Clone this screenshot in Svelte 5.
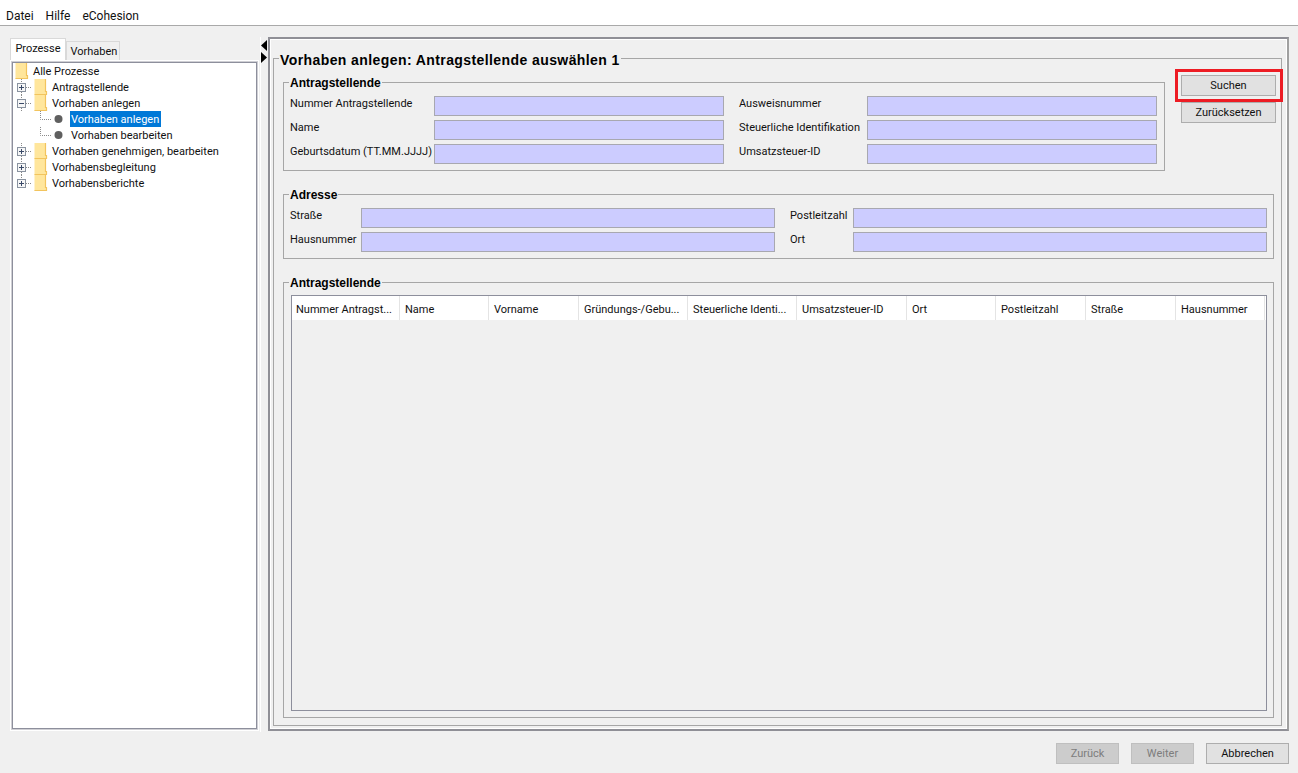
<script>
	const tree = [
		{ label: 'Alle Prozesse', depth: 0 },
		{ label: 'Antragstellende', depth: 1, toggle: '+' },
		{ label: 'Vorhaben anlegen', depth: 1, toggle: '-' },
		{ label: 'Vorhaben anlegen', depth: 2, selected: true },
		{ label: 'Vorhaben bearbeiten', depth: 2 },
		{ label: 'Vorhaben genehmigen, bearbeiten', depth: 1, toggle: '+' },
		{ label: 'Vorhabensbegleitung', depth: 1, toggle: '+' },
		{ label: 'Vorhabensberichte', depth: 1, toggle: '+', last: true }
	];

	const gutterWidth = [17, 36, 55];

	const columns = [
		['Nummer Antragst...', 108],
		['Name', 89],
		['Vorname', 90],
		['Gründungs-/Gebu...', 109],
		['Steuerliche Identi...', 109],
		['Umsatzsteuer-ID', 110],
		['Ort', 89],
		['Postleitzahl', 90],
		['Straße', 90],
		['Hausnummer', 89]
	];
</script>

<div class="app">
	<nav class="menubar">
		<span>Datei</span>
		<span>Hilfe</span>
		<span>eCohesion</span>
	</nav>

	<div class="workspace">
		<aside class="left">
			<div class="tabs">
				<div class="tab active">Prozesse</div>
				<div class="tab">Vorhaben</div>
			</div>
			<div class="tabbody">
				<div class="tree">
					{#each tree as row}
						<div class="row">
							<svg class="gutter" width={gutterWidth[row.depth]} height="16" viewBox="0 0 {gutterWidth[row.depth]} 16">
								{#if row.depth === 0}
									<path class="dots" d="M8.5 16V14" />
								{:else if row.depth === 1}
									<path class="dots" d="M8.5 0V3M8.5 13V{row.last ? 13 : 16}M13 8.5H19" />
									<rect class="box" x="4.5" y="4.5" width="8" height="8" />
									<path class="sign" d={row.toggle === '+' ? 'M6 8.5H11M8.5 6V11' : 'M6 8.5H11'} />
								{:else}
									<path class="dots" d="M27.5 0V8.5H39" />
									<circle cx="45.5" cy="8" r="4" fill="#5f5f5f" />
								{/if}
								{#if row.depth < 2}
									<g transform="translate({row.depth === 0 ? 2 : 21} 0)">
										<path d="M0.5 0H11.5V12H12.5V16H0.5Z" fill="#ffe69c" />
										<path d="M11.5 0V12.5H12.5V15.5H0.5" fill="none" stroke="#f2c45e" stroke-width="1.2" />
									</g>
								{/if}
							</svg>
							<span class="node" class:selected={row.selected}>{row.label}</span>
						</div>
					{/each}
				</div>
			</div>
		</aside>

		<div class="splitter">
			<svg width="7" height="28" viewBox="0 0 7 28">
				<path d="M6 3L0 8.5L6 14Z" fill="#000" />
				<path d="M0 15L6 20.5L0 26Z" fill="#000" />
			</svg>
		</div>

		<main class="pane">
			<fieldset class="page">
				<legend>Vorhaben anlegen: Antragstellende auswählen 1</legend>

				<div class="top">
					<fieldset class="group search">
						<legend>Antragstellende</legend>
						<div class="grid grid-a">
							<label>Nummer Antragstellende</label><div class="input"></div>
							<label>Ausweisnummer</label><div class="input"></div>
							<label>Name</label><div class="input"></div>
							<label>Steuerliche Identifikation</label><div class="input"></div>
							<label>Geburtsdatum (TT.MM.JJJJ)</label><div class="input"></div>
							<label>Umsatzsteuer-ID</label><div class="input"></div>
						</div>
					</fieldset>
					<div class="actions">
						<button class="btn marked">Suchen</button>
						<button class="btn">Zurücksetzen</button>
					</div>
				</div>

				<fieldset class="group address">
					<legend>Adresse</legend>
					<div class="grid grid-b">
						<label>Straße</label><div class="input"></div>
						<label>Postleitzahl</label><div class="input"></div>
						<label>Hausnummer</label><div class="input"></div>
						<label>Ort</label><div class="input"></div>
					</div>
				</fieldset>

				<fieldset class="group results">
					<legend>Antragstellende</legend>
					<div class="table">
						<div class="thead">
							{#each columns as [name, width]}
								<div class="th" style="width: {width}px">{name}</div>
							{/each}
						</div>
					</div>
				</fieldset>
			</fieldset>
		</main>
	</div>

	<footer class="footer">
		<button class="btn foot" disabled>Zurück</button>
		<button class="btn foot" disabled>Weiter</button>
		<button class="btn foot cancel">Abbrechen</button>
	</footer>
</div>

<style>
	:global(body) {
		margin: 0;
		background: #f0f0f0;
		overflow: hidden;
	}
	.app {
		width: 1298px;
		height: 773px;
		display: flex;
		flex-direction: column;
		font-family: Roboto, 'Noto Sans', sans-serif;
		font-size: 11px;
		color: #111;
		background: #f0f0f0;
	}
	.menubar {
		height: 19px;
		flex: none;
		background: #fff;
		border-bottom: 1px solid #a9a9a9;
		display: flex;
		align-items: center;
		gap: 12px;
		padding: 6px 0 0 6px;
		font-size: 12px;
	}
	.workspace {
		flex: none;
		height: 706px;
		display: flex;
		padding: 12px 0 0 10px;
		box-sizing: border-box;
	}
	.left {
		width: 249px;
		flex: none;
		display: flex;
		flex-direction: column;
	}
	.tabs {
		display: flex;
		align-items: flex-end;
		height: 22px;
		flex: none;
	}
	.tab {
		height: 19px;
		width: 54px;
		box-sizing: border-box;
		border: 1px solid #d9d9d9;
		border-bottom: none;
		background: #f0f0f0;
		padding-left: 2px;
		text-align: center;
		line-height: 19px;
	}
	.tab.active {
		height: 22px;
		width: 56px;
		padding-left: 0;
		background: #fff;
		line-height: 20px;
	}
	.tabbody {
		height: 671px;
		box-sizing: border-box;
		padding: 2px 2px 2px;
		background: #fff;
		flex: none;
	}
	.tree {
		height: 100%;
		box-sizing: border-box;
		border: 1px solid #8d8f9c;
		outline: 1px solid #cfcfd4;
		background: #fff;
	}
	.row {
		height: 16px;
		display: flex;
		align-items: center;
	}
	.gutter {
		flex: none;
	}
	.dots {
		fill: none;
		stroke: #8a8a8a;
		stroke-dasharray: 1 1;
	}
	.box {
		fill: #f6f6f6;
		stroke: #8a93a0;
	}
	.sign {
		fill: none;
		stroke: #3a4a68;
	}
	.node {
		display: block;
		line-height: 18px;
		height: 16px;
		padding: 0 2px 0 1px;
		margin-left: 2px;
		white-space: nowrap;
	}
	.node.selected {
		background: #0078d7;
		color: #fff;
	}
	.splitter {
		width: 8px;
		flex: none;
		box-sizing: border-box;
		margin: -1px 0 0 1px;
		border-left: 1px solid #fff;
	}
	.splitter svg {
		display: block;
	}
	.pane {
		width: 1021px;
		height: 694px;
		flex: none;
		box-sizing: border-box;
		margin-top: -1px;
		border: 2px solid #8f8f96;
		border-right-color: #a0a0a0;
		box-shadow: inset 0 0 0 1px #fff;
		background: #f0f0f0;
		padding: 9px 5px 3px 3px;
	}
	fieldset {
		margin: 0;
		min-width: 0;
		box-sizing: border-box;
		border: 1px solid #a6a6a6;
	}
	legend {
		font-family: 'Liberation Sans', Arial, sans-serif;
		font-weight: 700;
		color: #000;
		padding: 0 1px;
	}
	.page {
		height: 100%;
		padding: 0 7px 7px 9px;
		display: flex;
		flex-direction: column;
	}
	.page > legend {
		font-size: 14px;
		letter-spacing: 0.41px;
		line-height: 16px;
		padding-top: 4px;
		margin-left: -4px;
	}
	.group {
		padding: 0;
	}
	.group > legend {
		font-size: 12px;
		line-height: 14px;
		padding-top: 2px;
		margin-left: -1px;
	}
	.top {
		display: flex;
		height: 99px;
		margin-top: 10px;
	}
	.search {
		flex: none;
		width: 882px;
		height: 97px;
		margin-top: -4px;
		padding: 6px 7px 0 6px;
	}
	.grid {
		display: grid;
		align-items: center;
		row-gap: 4px;
	}
	.grid label {
		line-height: 14px;
		margin-bottom: 4px;
		align-self: center;
		white-space: nowrap;
	}
	.grid-a {
		grid-template-columns: 144px 290px 143px 290px;
		grid-auto-rows: 20px;
	}
	.grid-a label:nth-of-type(even) {
		padding-left: 15px;
	}
	.address {
		height: 73px;
		margin-top: 9px;
		padding: 6px 7px 0 6px;
	}
	.grid-b {
		grid-template-columns: 71px 414px 78px 414px;
		grid-auto-rows: 20px;
	}
	.grid-b label:nth-of-type(even) {
		padding-left: 15px;
	}
	.input {
		height: 20px;
		box-sizing: border-box;
		background: #ccccff;
		border: 1px solid #a8a8b0;
	}
	.actions {
		flex: none;
		margin-left: 16px;
		margin-top: -3px;
		display: flex;
		flex-direction: column;
		gap: 6px;
	}
	.btn {
		width: 95px;
		height: 21px;
		padding: 0;
		box-sizing: border-box;
		background: #e1e1e1;
		border: 1px solid #adadad;
		font: inherit;
		color: #111;
		position: relative;
	}
	.btn.marked::after {
		content: '';
		position: absolute;
		inset: -7px -8px -7px -7px;
		border: 3px solid #ed1c24;
		pointer-events: none;
	}
	.results {
		flex: 1;
		min-height: 0;
		margin-top: 15px;
		padding: 5px 6px 6px 7px;
	}
	.results > legend {
		margin-left: -2px;
	}
	.table {
		height: 100%;
		box-sizing: border-box;
		border: 1px solid #8d8f9c;
		background: #f0f0f0;
	}
	.thead {
		display: flex;
		background: #fff;
		height: 24px;
	}
	.th {
		box-sizing: border-box;
		flex: none;
		padding: 6px 0 0 5px;
		border-right: 1px solid #e4e4e4;
		white-space: nowrap;
		overflow: hidden;
		line-height: 15px;
	}
	.th:first-child {
		padding-left: 4px;
	}
	.footer {
		flex: 1;
		display: flex;
		justify-content: flex-end;
		gap: 12px;
		padding: 11px 9px 0 0;
	}
	.foot {
		height: 21px;
		width: 63px;
	}
	.foot:disabled {
		background: #cccccc;
		border-color: #bfbfbf;
		color: #7d7d7d;
	}
	.cancel {
		width: 83px;
	}
</style>
